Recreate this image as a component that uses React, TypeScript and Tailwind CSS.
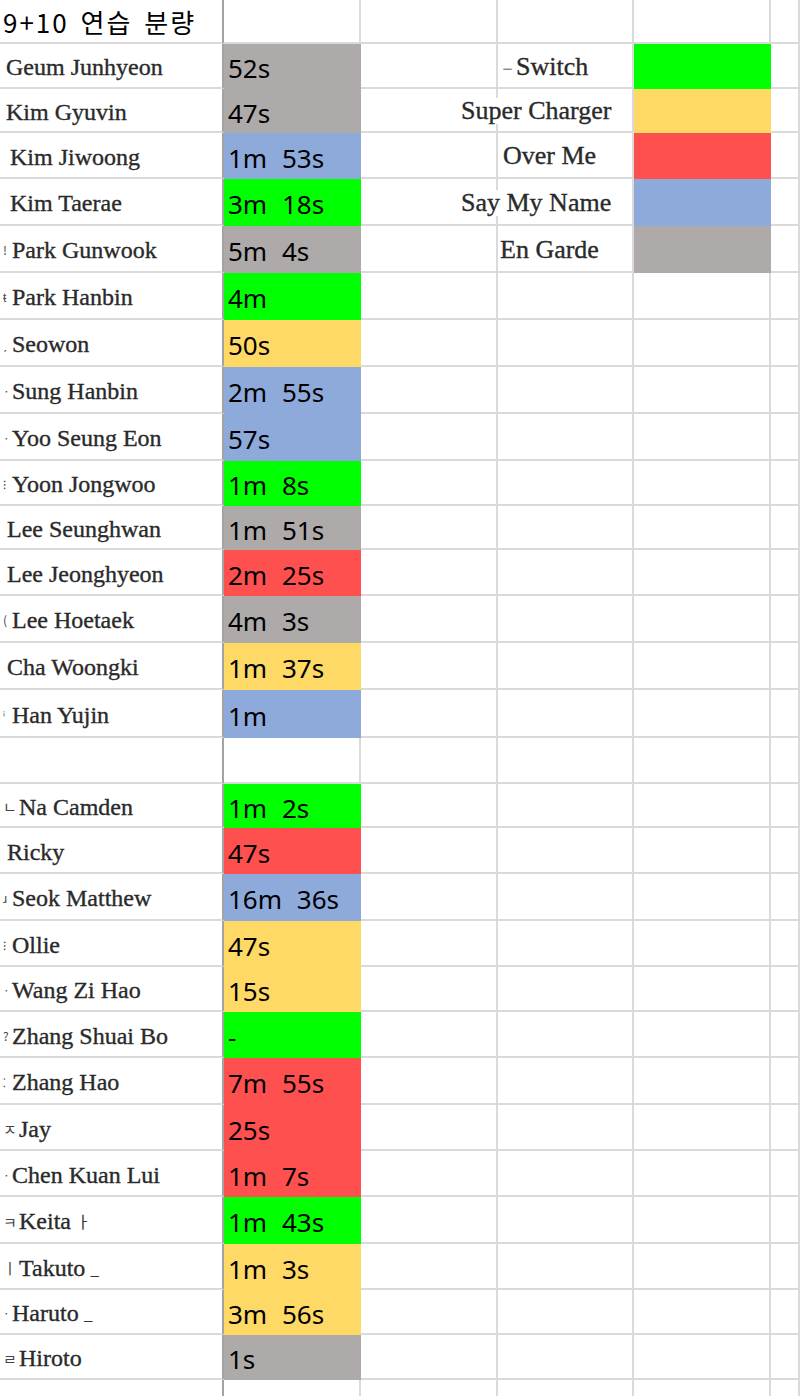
import type { ReactNode } from "react";

type Fill = "gray" | "blue" | "green" | "yellow" | "red" | "none";

const fills: Record<Fill, string> = {
  gray: "bg-[#aeaaaa] border-transparent",
  blue: "bg-[#8eaadb] border-transparent",
  green: "bg-[#00ff00] border-transparent",
  yellow: "bg-[#ffd966] border-transparent",
  red: "bg-[#ff5050] border-transparent",
  none: "bg-white border-[#dadada]",
};

type Row = {
  h: string;
  name?: string;
  pl?: string;
  mark?: string;
  tail?: string;
  time?: string;
  fill: Fill;
  legend?: { label: string; ml: string; mark?: string; fill: Fill };
};

const rows: Row[] = [
  { h: "h-[45px]", name: "Geum Junhyeon", pl: "pl-[6px]", time: "52s", fill: "gray", legend: { label: "Switch", ml: "ml-[139px]", mark: "ㅡ", fill: "green" } },
  { h: "h-[44px]", name: "Kim Gyuvin", pl: "pl-[6px]", time: "47s", fill: "gray", legend: { label: "Super Charger", ml: "ml-[98px]", fill: "yellow" } },
  { h: "h-[46px]", name: "Kim Jiwoong", pl: "pl-[10px]", time: "1m 53s", fill: "blue", legend: { label: "Over Me", ml: "ml-[140px]", fill: "red" } },
  { h: "h-[47px]", name: "Kim Taerae", pl: "pl-[10px]", time: "3m 18s", fill: "green", legend: { label: "Say My Name", ml: "ml-[98px]", fill: "blue" } },
  { h: "h-[47px]", name: "Park Gunwook", pl: "pl-[3px]", mark: "!", time: "5m 4s", fill: "gray", legend: { label: "En Garde", ml: "ml-[137px]", fill: "gray" } },
  { h: "h-[47px]", name: "Park Hanbin", pl: "pl-[3px]", mark: "ŧ", time: "4m", fill: "green" },
  { h: "h-[47px]", name: "Seowon", pl: "pl-[3px]", mark: "ˏ", time: "50s", fill: "yellow" },
  { h: "h-[47px]", name: "Sung Hanbin", pl: "pl-[3px]", mark: "·", time: "2m 55s", fill: "blue" },
  { h: "h-[47px]", name: "Yoo Seung Eon", pl: "pl-[3px]", mark: "·", time: "57s", fill: "blue" },
  { h: "h-[45px]", name: "Yoon Jongwoo", pl: "pl-[3px]", mark: "⁝", time: "1m 8s", fill: "green" },
  { h: "h-[44px]", name: "Lee Seunghwan", pl: "pl-[7px]", time: "1m 51s", fill: "gray" },
  { h: "h-[46px]", name: "Lee Jeonghyeon", pl: "pl-[7px]", time: "2m 25s", fill: "red" },
  { h: "h-[47px]", name: "Lee Hoetaek", pl: "pl-[3px]", mark: "(", time: "4m 3s", fill: "gray" },
  { h: "h-[47px]", name: "Cha Woongki", pl: "pl-[7px]", time: "1m 37s", fill: "yellow" },
  { h: "h-[48px]", name: "Han Yujin", pl: "pl-[3px]", mark: "ⁱ", time: "1m", fill: "blue" },
  { h: "h-[46px]", fill: "none" },
  { h: "h-[44px]", name: "Na Camden", pl: "pl-[3px]", mark: "ㄴ", time: "1m 2s", fill: "green" },
  { h: "h-[46px]", name: "Ricky", pl: "pl-[7px]", time: "47s", fill: "red" },
  { h: "h-[47px]", name: "Seok Matthew", pl: "pl-[3px]", mark: "ɹ", time: "16m 36s", fill: "blue" },
  { h: "h-[46px]", name: "Ollie", pl: "pl-[3px]", mark: "⁝", time: "47s", fill: "yellow" },
  { h: "h-[45px]", name: "Wang Zi Hao", pl: "pl-[3px]", mark: "·", time: "15s", fill: "yellow" },
  { h: "h-[46px]", name: "Zhang Shuai Bo", pl: "pl-[3px]", mark: "?", time: "-", fill: "green" },
  { h: "h-[47px]", name: "Zhang Hao", pl: "pl-[3px]", mark: "⁚", time: "7m 55s", fill: "red" },
  { h: "h-[46px]", name: "Jay", pl: "pl-[3px]", mark: "ㅈ", time: "25s", fill: "red" },
  { h: "h-[46px]", name: "Chen Kuan Lui", pl: "pl-[3px]", mark: "·", time: "1m 7s", fill: "red" },
  { h: "h-[47px]", name: "Keita", pl: "pl-[3px]", mark: "ㅋ", tail: "ㅏ", time: "1m 43s", fill: "green" },
  { h: "h-[46px]", name: "Takuto", pl: "pl-[3px]", mark: "ㅣ", tail: "_", time: "1m 3s", fill: "yellow" },
  { h: "h-[45px]", name: "Haruto", pl: "pl-[3px]", mark: "·", tail: "_", time: "3m 56s", fill: "yellow" },
  { h: "h-[45px]", name: "Hiroto", pl: "pl-[3px]", mark: "ㄹ", time: "1s", fill: "gray" },
  { h: "h-[45px]", fill: "none" },
];

const serif = "font-['Liberation_Serif',serif]";
const sans = "font-['Noto_Sans','Noto_Sans_CJK_KR',sans-serif]";

function Cell({ className, children }: { className: string; children?: ReactNode }) {
  return (
    <div className={`flex h-full shrink-0 items-center border-b-2 border-r-2 ${className}`}>
      {children}
    </div>
  );
}

function Mark({ ch }: { ch: string }) {
  const wide = /[ㄱ-ㅣ]/.test(ch);
  return (
    <span
      className={`inline-block shrink-0 font-['Noto_Sans_CJK_KR',sans-serif] leading-none text-[#444] ${
        wide ? "w-[16px] text-[15px]" : "w-[9px] text-[12px]"
      }`}
    >
      {ch}
    </span>
  );
}

export default function App() {
  return (
    <div className="h-[1396px] w-[800px] overflow-hidden bg-white">
      <div className="flex h-[44px]">
        <Cell className="w-[224px] border-b-[#dadada] border-r-[#a3a3a3] pl-[3px] pt-[2px]">
          <span className="whitespace-nowrap font-['Noto_Sans_CJK_KR',sans-serif] text-[26px] leading-none tracking-[2px] text-black [word-spacing:4px]">
            9+10 연습 분량
          </span>
        </Cell>
        <Cell className="w-[137px] border-[#dadada]" />
        <Cell className="w-[137px] border-[#dadada]" />
        <Cell className="w-[136px] border-[#dadada]" />
        <Cell className="w-[137px] border-[#dadada]" />
        <Cell className="flex-1 border-r-0 border-[#dadada]" />
      </div>
      {rows.map((r, i) => (
        <div key={i} className={`flex ${r.h}`}>
          <Cell className={`w-[224px] border-b-[#dadada] border-r-[#a3a3a3] ${r.pl ?? ""} pt-[3px]`}>
            {r.mark && <Mark ch={r.mark} />}
            {r.name && (
              <span
                className={`${serif} whitespace-nowrap text-[24px] leading-none text-[#2a2a2a] [-webkit-text-stroke:0.35px_#2a2a2a]`}
              >
                {r.name}
              </span>
            )}
            {r.tail && (
              <span className="ml-[5px] font-['Noto_Sans_CJK_KR',sans-serif] text-[16px] leading-none text-[#333]">
                {r.tail}
              </span>
            )}
          </Cell>
          <Cell className={`w-[137px] pl-[4px] pt-[5px] ${fills[r.fill]}`}>
            {r.time && (
              <span className={`${sans} whitespace-nowrap text-[26px] leading-none text-black [word-spacing:8px]`}>
                {r.time}
              </span>
            )}
          </Cell>
          {r.legend ? (
            <>
              <Cell className="w-[137px] border-[#dadada] pt-[2px]">
                <span
                  className={`relative z-10 flex shrink-0 items-center whitespace-nowrap bg-white px-[2px] ${r.legend.ml} ${serif} text-[26px] leading-none text-[#2a2a2a] [-webkit-text-stroke:0.35px_#2a2a2a]`}
                >
                  {r.legend.mark && (
                    <span className="mr-[3px] text-[11px] [-webkit-text-stroke:0px]">{r.legend.mark}</span>
                  )}
                  {r.legend.label}
                </span>
              </Cell>
              <Cell className="w-[136px] border-[#dadada]" />
              <Cell className={`w-[137px] ${fills[r.legend.fill]}`} />
            </>
          ) : (
            <>
              <Cell className="w-[137px] border-[#dadada]" />
              <Cell className="w-[136px] border-[#dadada]" />
              <Cell className="w-[137px] border-[#dadada]" />
            </>
          )}
          <Cell className="flex-1 border-r-0 border-[#dadada]" />
        </div>
      ))}
    </div>
  );
}
